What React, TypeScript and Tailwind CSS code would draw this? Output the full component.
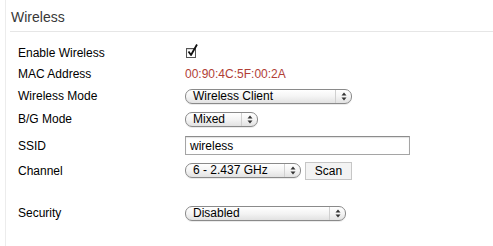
const FONT = "font-['Liberation_Sans',Arial,sans-serif]";

function Arrows() {
  return (
    <svg width="6" height="9" viewBox="0 0 6 9" className="shrink-0">
      <path d="M3 0.5 L5.5 3.5 L0.5 3.5 Z" fill="#333" />
      <path d="M3 8.5 L5.5 5.5 L0.5 5.5 Z" fill="#333" />
    </svg>
  );
}

function Select({ value, width }: { value: string; width: string }) {
  return (
    <div
      className={`${width} flex h-[15px] items-center rounded-[7px] border border-[#8a8a8a] bg-linear-to-b from-white via-[#f4f4f4] to-[#e2e2e2] shadow-[0_1px_0_rgba(0,0,0,0.08)]`}
    >
      <span className="flex-1 truncate pl-[7px] text-[12px] leading-[13px] text-black">
        {value}
      </span>
      <div className="flex h-full w-[16px] items-center justify-center border-l border-[#d0d0d0]">
        <Arrows />
      </div>
    </div>
  );
}

function Row({
  label,
  h,
  children,
}: {
  label: string;
  h: string;
  children: React.ReactNode;
}) {
  return (
    <div className={`flex ${h} items-center`}>
      <div className="w-[179px] shrink-0 pl-[12px] text-[12px] text-black">{label}</div>
      <div className="flex items-center gap-[4px]">{children}</div>
    </div>
  );
}

export default function App() {
  return (
    <div className={`${FONT} h-[246px] w-[493px] bg-white`}>
      <div className="ml-[5px] h-full border-l border-[#ececec]">
        <div className="ml-[4px]">
          <div className="flex h-[31px] items-center pt-[3px] text-[14px] text-[#383838]">
            <span className="pl-px">Wireless</span>
          </div>
          <div className="h-px bg-[#e6e6e6]" />
        </div>
        <div className="pt-[11px]">
          <Row label="Enable Wireless" h="h-[20px]">
            <div className="relative ml-px h-[10px] w-[10px] border border-[#555] bg-white shadow-[inset_0_1px_1px_rgba(0,0,0,0.15)]">
              <svg
                width="12"
                height="13"
                viewBox="0 0 12 13"
                className="absolute -top-[5px] left-0"
              >
                <path
                  d="M1.5 7.5 L4 11 L10 0.5"
                  fill="none"
                  stroke="#111"
                  strokeWidth="1.8"
                  strokeLinejoin="round"
                />
              </svg>
            </div>
          </Row>
          <Row label="MAC Address" h="h-[21px]">
            <span className="text-[12px] text-[#b13e36]">00:90:4C:5F:00:2A</span>
          </Row>
          <Row label="Wireless Mode" h="h-[24px]">
            <Select value="Wireless Client" width="w-[167px]" />
          </Row>
          <Row label="B/G Mode" h="h-[22px]">
            <Select value="Mixed" width="w-[73px]" />
          </Row>
          <Row label="SSID" h="h-[31px]">
            <div className="flex h-[19px] w-[225px] items-center border border-[#a5a5a5] border-t-[#8c8c8c] bg-white pl-[4px] text-[12px] text-black shadow-[inset_0_1px_1px_rgba(0,0,0,0.12)]">
              wireless
            </div>
          </Row>
          <Row label="Channel" h="h-[19px]">
            <Select value="6 - 2.437 GHz" width="w-[116px]" />
            <button className="flex h-[18px] w-[47px] items-center justify-center border border-[#c6c6c6] bg-[#f3f3f3] text-[12px] text-black">
              Scan
            </button>
          </Row>
          <div className="h-[23px]" />
          <Row label="Security" h="h-[20px]">
            <Select value="Disabled" width="w-[161px]" />
          </Row>
        </div>
      </div>
    </div>
  );
}
